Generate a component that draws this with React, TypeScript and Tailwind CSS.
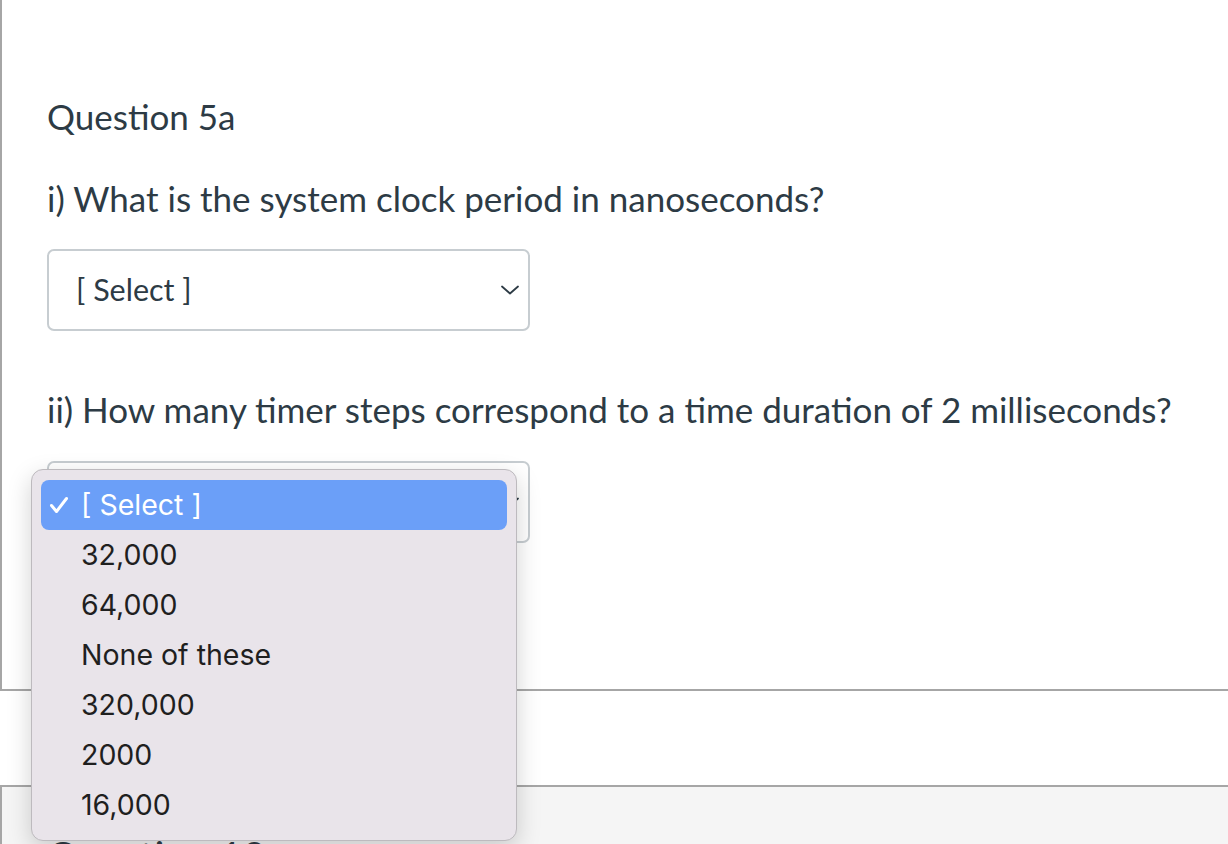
import React from "react";

const Chevron = () => (
    <svg width="18" height="10" viewBox="0 0 18 10" fill="none">
        <path d="M1 1.5 L9 8.5 L17 1.5" stroke="#2d3b45" strokeWidth="1.8" strokeLinecap="round" strokeLinejoin="round" />
    </svg>
);

const Check = () => (
    <svg width="20" height="18" viewBox="0 0 20 18" fill="none" className="shrink-0">
        <path d="M2.5 9.5 L7.5 15.5 L17.5 2.5" stroke="white" strokeWidth="3" strokeLinecap="round" strokeLinejoin="round" />
    </svg>
);

const SelectBox = () => (
    <div className="w-[483px] h-[82px] border-2 border-[#c7cdd1] rounded-[7px] bg-white flex flex-row items-center justify-between pl-[27px] pr-[9px]">
        <span className="text-[30.5px]">[ Select ]</span>
        <Chevron />
    </div>
);

const options = ["32,000", "64,000", "None of these", "320,000", "2000", "16,000"];

const Dropdown = () => (
    <div
        className="absolute left-[31px] top-[469px] w-[486px] h-[372px] bg-[#e9e4ea] border border-[#bdbabe] rounded-[12px] shadow-[0_8px_24px_rgba(0,0,0,0.18)] px-[9px] pt-[10px] text-[#1f1f1f]"
        style={{ fontFamily: "Inter, 'Liberation Sans', sans-serif" }}
    >
        <div className="h-[50px] rounded-[8px] bg-[#6b9ff8] text-white flex flex-row items-center text-[28.5px]">
            <span className="w-[40px] pl-[8px] flex items-center"><Check /></span>
            <span>[ Select ]</span>
        </div>
        {options.map((o) => (
            <div key={o} className="h-[50px] flex items-center pl-[40px] text-[28.5px]">{o}</div>
        ))}
    </div>
);

export default function App() {
    return (
        <div className="relative w-[1228px] h-[844px] overflow-hidden bg-white text-[#2d3b45]" style={{ fontFamily: "Lato, 'Noto Sans', sans-serif" }}>
            <div className="h-[691px] border-l-2 border-b-2 border-[#a6a6a6] pl-[45px] pt-[94px]">
                <h2 className="text-[35px] leading-[44px]">Question 5a</h2>
                <p className="mt-[38px] text-[35px] leading-[44px]">i) What is the system clock period in nanoseconds?</p>
                <div className="mt-[29px]"><SelectBox /></div>
                <p className="mt-[56px] text-[35px] leading-[44px]">ii) How many timer steps correspond to a time duration of 2 milliseconds?</p>
                <div className="mt-[30px]"><SelectBox /></div>
            </div>
            <div className="mt-[94px] h-[200px] border-l-2 border-t-2 border-[#a6a6a6] bg-[#f5f5f5] pl-[45px] pt-[44px]">
                <h2 className="text-[40px] leading-[50px]">Question 12</h2>
            </div>
            <Dropdown />
        </div>
    );
}
